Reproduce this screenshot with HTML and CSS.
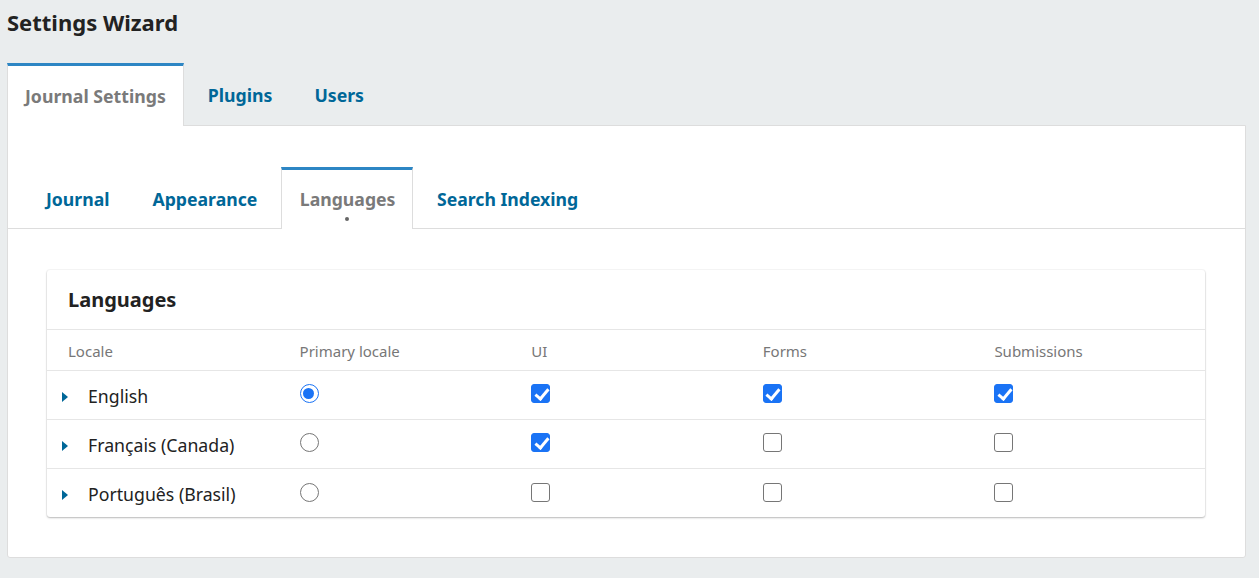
FILE: index.html
```html
<!DOCTYPE html>
<html lang="en">
<head>
<meta charset="utf-8">
<title>Settings Wizard</title>
<link rel="stylesheet" href="styles.css">
</head>
<body>
<div class="page">
  <h1 class="page-title">Settings Wizard</h1>
  <div class="tabs-top">
    <button class="tab-top active">Journal Settings</button>
    <button class="tab-top">Plugins</button>
    <button class="tab-top">Users</button>
  </div>
  <div class="panel">
    <div class="tabs-inner">
      <button class="tab-inner">Journal</button>
      <button class="tab-inner">Appearance</button>
      <button class="tab-inner active">Languages<span class="dot"></span></button>
      <button class="tab-inner">Search Indexing</button>
    </div>
    <div class="panel-body">
      <div class="card">
        <div class="card-header">Languages</div>
        <table class="grid">
          <thead>
            <tr>
              <th>Locale</th>
              <th>Primary locale</th>
              <th>UI</th>
              <th>Forms</th>
              <th>Submissions</th>
            </tr>
          </thead>
          <tbody>
            <tr>
              <td class="locale"><span class="caret"></span>English</td>
              <td><span class="radio on"></span></td>
              <td><span class="check on"></span></td>
              <td><span class="check on"></span></td>
              <td><span class="check on"></span></td>
            </tr>
            <tr>
              <td class="locale"><span class="caret"></span>Français (Canada)</td>
              <td><span class="radio"></span></td>
              <td><span class="check on"></span></td>
              <td><span class="check"></span></td>
              <td><span class="check"></span></td>
            </tr>
            <tr>
              <td class="locale"><span class="caret"></span>Português (Brasil)</td>
              <td><span class="radio"></span></td>
              <td><span class="check"></span></td>
              <td><span class="check"></span></td>
              <td><span class="check"></span></td>
            </tr>
          </tbody>
        </table>
      </div>
    </div>
  </div>
</div>
</body>
</html>
```
FILE: styles.css
```css
* { box-sizing: border-box; }
html, body { margin: 0; padding: 0; }
body {
  background: #eaedee;
  font-family: "Noto Sans", "Open Sans", sans-serif;
  color: #222;
}
.page { padding: 0 13px 0 7px; }
.page-title {
  margin: 0;
  font-size: 22px;
  font-weight: 700;
  line-height: 26px;
  padding-top: 9px;
  height: 63px;
  color: #222;
}
.tabs-top {
  display: flex;
  gap: 6px;
  height: 62px;
}
button {
  font-family: inherit;
  background: none;
  border: none;
  cursor: pointer;
}
.tab-top {
  font-size: 17.7px;
  font-weight: 700;
  color: #006798;
  padding: 0 17px 0;
  border: 1px solid transparent;
  border-top: 3px solid transparent;
  height: 62px;
  margin: 0;
}
.tab-top.active {
  background: #fff;
  color: #7a7a7a;
  border-color: #ddd;
  border-top-color: #2d86c4;
  border-bottom: none;
  height: 63px;
  padding-bottom: 1px;
  position: relative;
  z-index: 1;
}
.panel {
  background: #fff;
  border: 1px solid #ddd;
  border-radius: 0 0 3px 3px;
  height: 433px;
}
.tabs-inner {
  display: flex;
  gap: 5px;
  padding: 41px 19px 0;
  border-bottom: 1px solid #ddd;
  height: 103px;
}
.tab-inner {
  position: relative;
  font-size: 17.65px;
  font-weight: 700;
  color: #006798;
  padding: 0 18px 1px;
  border: 1px solid transparent;
  border-top: 3px solid transparent;
  height: 62px;
  margin: 0;
}
.tab-inner.active {
  color: #7a7a7a;
  border-color: #ddd;
  border-top-color: #2d86c4;
  border-bottom: none;
  background: #fff;
  padding-left: 17.5px;
  padding-right: 16.5px;
}
.dot {
  position: absolute;
  left: 50%;
  bottom: 8px;
  width: 4px;
  height: 4px;
  margin-left: -2px;
  border-radius: 50%;
  background: #666;
}
.panel-body {
  padding: 41px 40px 40px 39px;
}
.card {
  background: #fff;
  border-radius: 3px;
  box-shadow: 0 1px 2px rgba(0,0,0,.25), 0 0 0 1px rgba(0,0,0,.03);
}
.card-header {
  height: 60px;
  padding: 0 21px;
  display: flex;
  align-items: center;
  font-size: 20px;
  font-weight: 700;
  color: #222;
  border-bottom: 1px solid #e6e6e6;
}
.grid {
  width: 100%;
  border-collapse: collapse;
  table-layout: fixed;
}
.grid th {
  text-align: left;
  font-weight: 400;
  font-size: 15px;
  color: #777;
  height: 40px;
  padding: 3px 0 0 21px;
  border-bottom: 1px solid #e6e6e6;
}
.grid td {
  height: 49px;
  padding: 0 0 0 21px;
  border-bottom: 1px solid #e6e6e6;
  font-size: 17.7px;
  vertical-align: middle;
}
.grid tbody tr:last-child td { border-bottom: none; }
.grid td.locale { padding-left: 15px; color: #222; padding-top: 2px; }
.caret {
  display: inline-block;
  width: 0;
  height: 0;
  border-top: 5px solid transparent;
  border-bottom: 5px solid transparent;
  border-left: 6px solid #006798;
  margin-right: 20px;
  vertical-align: 1px;
}
.radio, .check {
  display: inline-block;
  width: 19px;
  height: 19px;
  vertical-align: middle;
  position: relative;
  top: -3px;
}
.radio {
  border-radius: 50%;
  border: 1px solid #767676;
  background: #fff;
}
.radio.on {
  border: 1.5px solid #1a73f5;
}
.radio.on::after {
  content: "";
  position: absolute;
  left: 2.5px; top: 2.5px;
  width: 11px; height: 11px;
  border-radius: 50%;
  background: #1a73f5;
}
.check {
  border: 1px solid #767676;
  border-radius: 3px;
  background: #fff;
}
.check.on {
  background: #1a73f5;
  border-color: #1a73f5;
}
.check.on::after {
  content: "";
  position: absolute;
  left: 5.5px;
  top: 1px;
  width: 5px;
  height: 11px;
  border: solid #fff;
  border-width: 0 3px 3px 0;
  transform: rotate(40deg);
}
```
